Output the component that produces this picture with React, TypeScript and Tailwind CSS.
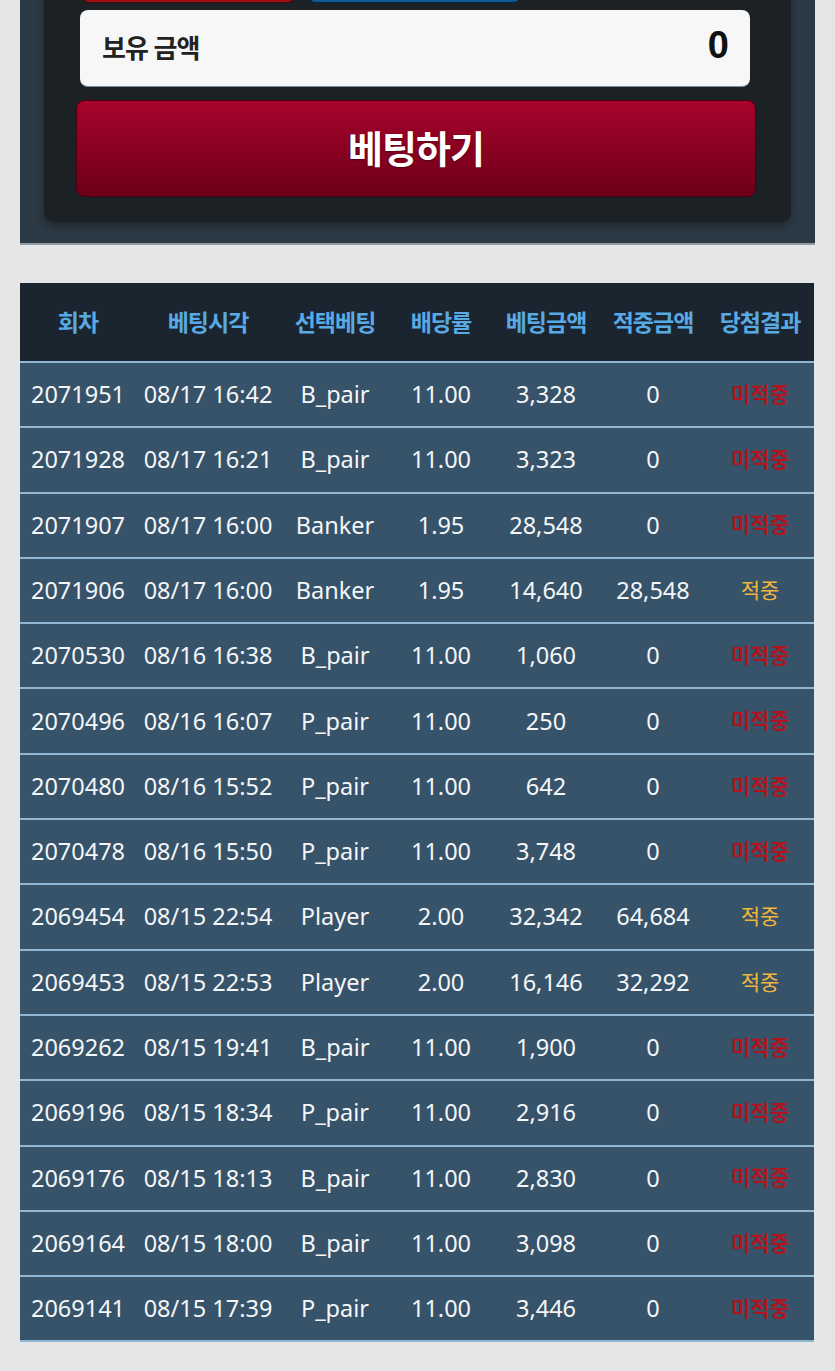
import React from 'react';

type Row = {
  round: string;
  time: string;
  pick: string;
  odds: string;
  amount: string;
  win: string;
  hit: boolean;
};

const rows: Row[] = [
  { round: '2071951', time: '08/17 16:42', pick: 'B_pair', odds: '11.00', amount: '3,328', win: '0', hit: false },
  { round: '2071928', time: '08/17 16:21', pick: 'B_pair', odds: '11.00', amount: '3,323', win: '0', hit: false },
  { round: '2071907', time: '08/17 16:00', pick: 'Banker', odds: '1.95', amount: '28,548', win: '0', hit: false },
  { round: '2071906', time: '08/17 16:00', pick: 'Banker', odds: '1.95', amount: '14,640', win: '28,548', hit: true },
  { round: '2070530', time: '08/16 16:38', pick: 'B_pair', odds: '11.00', amount: '1,060', win: '0', hit: false },
  { round: '2070496', time: '08/16 16:07', pick: 'P_pair', odds: '11.00', amount: '250', win: '0', hit: false },
  { round: '2070480', time: '08/16 15:52', pick: 'P_pair', odds: '11.00', amount: '642', win: '0', hit: false },
  { round: '2070478', time: '08/16 15:50', pick: 'P_pair', odds: '11.00', amount: '3,748', win: '0', hit: false },
  { round: '2069454', time: '08/15 22:54', pick: 'Player', odds: '2.00', amount: '32,342', win: '64,684', hit: true },
  { round: '2069453', time: '08/15 22:53', pick: 'Player', odds: '2.00', amount: '16,146', win: '32,292', hit: true },
  { round: '2069262', time: '08/15 19:41', pick: 'B_pair', odds: '11.00', amount: '1,900', win: '0', hit: false },
  { round: '2069196', time: '08/15 18:34', pick: 'P_pair', odds: '11.00', amount: '2,916', win: '0', hit: false },
  { round: '2069176', time: '08/15 18:13', pick: 'B_pair', odds: '11.00', amount: '2,830', win: '0', hit: false },
  { round: '2069164', time: '08/15 18:00', pick: 'B_pair', odds: '11.00', amount: '3,098', win: '0', hit: false },
  { round: '2069141', time: '08/15 17:39', pick: 'P_pair', odds: '11.00', amount: '3,446', win: '0', hit: false },
];

const headers = ['회차', '베팅시각', '선택베팅', '배당률', '베팅금액', '적중금액', '당첨결과'];
const widths = ['w-[116px]', 'w-[144px]', 'w-[110px]', 'w-[102px]', 'w-[108px]', 'w-[106px]', 'w-[108px]'];

const BetPanel: React.FC = () => (
  <div className="mx-[20px] bg-[#2c3a45] border-b-2 border-[#8d9ca6] pb-[21px]">
    <div className="mx-[24px] bg-[#1c2126] rounded-b-[10px] shadow-[0_4px_8px_rgba(0,0,0,0.35)] pb-[25px]">
      <div className="flex gap-[9px] pl-[36px] -mt-[47px]">
        <div className="w-[217px] h-[50px] rounded-[10px] bg-[#a30d12] border border-[#3a0a0a]" />
        <div className="w-[217px] h-[50px] rounded-[10px] bg-[#0e5a92] border border-[#0a2438]" />
      </div>
      <div className="mt-[7px] ml-[36px] mr-[41px] h-[77px] rounded-[8px] bg-[#f7f7f7] border-b border-[#7a8a99] flex items-center justify-between pl-[22px] pr-[21px]">
        <span className="text-[26px] font-bold text-[#222] tracking-[-1px]">보유 금액</span>
        <span className="text-[38px] font-bold text-[#111] font-['Liberation_Sans',sans-serif] -mt-[6px]">0</span>
      </div>
      <div className="mt-[13px] ml-[32px] mr-[35px] h-[97px] rounded-[8px] border border-[#4a0010] bg-gradient-to-b from-[#a8032b] to-[#6d0019] flex items-center justify-center">
        <span className="text-[38px] font-bold text-white tracking-[-1px] [text-shadow:0_1px_2px_rgba(0,0,0,0.4)]">베팅하기</span>
      </div>
    </div>
  </div>
);

const HistoryTable: React.FC = () => (
  <div className="mx-[20px] mt-[38px] w-[794px]">
    <div className="flex h-[78px] bg-[#1b2530] items-center">
      {headers.map((h, i) => (
        <div key={h} className={`${widths[i]} text-center text-[23px] font-bold text-[#59a9e4] tracking-[-1px]`}>
          {h}
        </div>
      ))}
    </div>
    {rows.map((r) => (
      <div key={r.round} className="flex h-[65.3px] items-center bg-[#36536a] border-t-2 border-[#8fb7d4] text-[23.5px] text-[#f4f6f8]">
        <div className={`${widths[0]} text-center`}>{r.round}</div>
        <div className={`${widths[1]} text-center`}>{r.time}</div>
        <div className={`${widths[2]} text-center`}>{r.pick}</div>
        <div className={`${widths[3]} text-center`}>{r.odds}</div>
        <div className={`${widths[4]} text-center`}>{r.amount}</div>
        <div className={`${widths[5]} text-center`}>{r.win}</div>
        <div
          className={`${widths[6]} text-center text-[21px] ${r.hit ? 'text-[#f2b63a]' : 'text-[#b0141f] font-bold'}`}
        >
          {r.hit ? '적중' : '미적중'}
        </div>
      </div>
    ))}
    <div className="h-[2px] bg-[#8fb7d4]" />
  </div>
);

export default function App() {
  return (
    <div className="min-h-[1371px] bg-[#e6e6e6] overflow-hidden font-['Noto_Sans','Noto_Sans_CJK_KR',sans-serif]">
      <BetPanel />
      <HistoryTable />
    </div>
  );
}
